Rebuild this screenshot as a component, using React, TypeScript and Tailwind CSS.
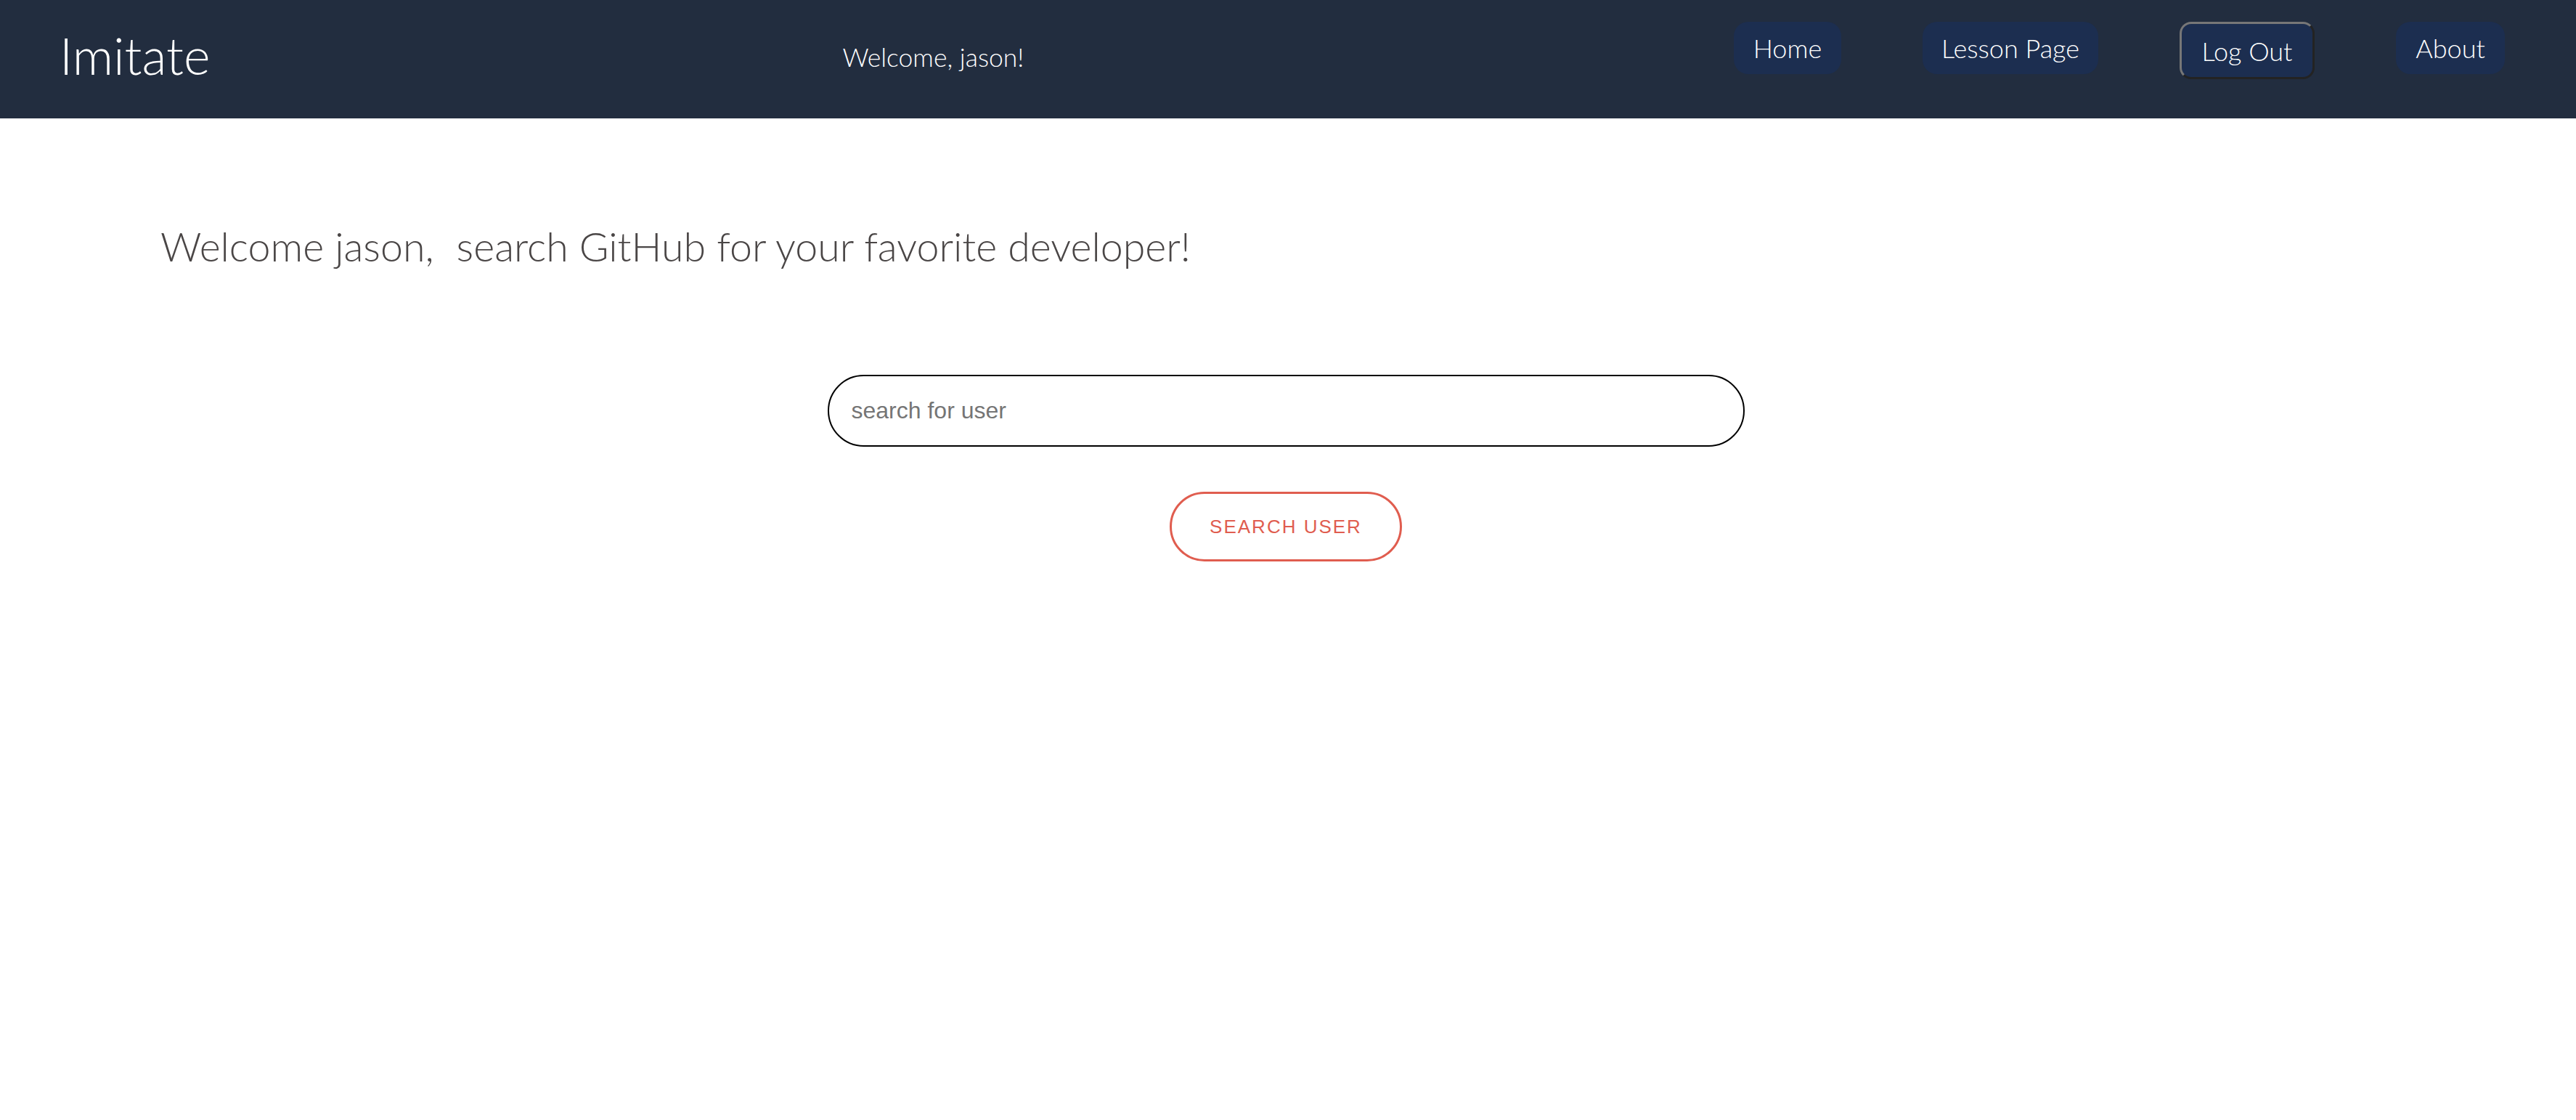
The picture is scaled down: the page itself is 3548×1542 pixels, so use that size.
import { useState } from 'react';

const navLinks = [
  { label: 'Home', width: 'w-[148px]' },
  { label: 'Lesson Page', width: 'w-[242px]' },
];

export default function App() {
  const [query, setQuery] = useState('');

  return (
    <div className="min-h-screen bg-white" style={{ fontFamily: 'Lato, "Open Sans", sans-serif' }}>
      <header className="h-[163px] bg-[#222d3f] flex items-start text-white">
        <div className="mt-[41px] pl-[82px] text-[70px] leading-none font-light">Imitate</div>
        <div className="mt-[61px] ml-[871px] text-[35.5px] leading-none font-light">Welcome, jason!</div>
        <nav className="ml-auto pr-[98px] mt-[30px] flex items-start gap-[112px]">
          {navLinks.map(link => (
            <a
              key={link.label}
              href="#"
              className={`${link.width} h-[72px] flex items-center justify-center rounded-[20px] bg-[#1c2e50] text-[36px] leading-none font-light`}
            >
              {link.label}
            </a>
          ))}
          <button className="w-[186px] h-[79px] flex items-center justify-center rounded-[16px] border-[3px] border-t-[#777777] border-l-[#777777] border-b-[#232323] border-r-[#232323] bg-[#1c2e50] text-[36px] leading-none font-light text-white">
            Log Out
          </button>
          <a
            href="#"
            className="w-[150px] h-[72px] flex items-center justify-center rounded-[20px] bg-[#1c2e50] text-[36px] leading-none font-light"
          >
            About
          </a>
        </nav>
      </header>

      <main>
        <h1 className="mt-[148px] h-[56px] pl-[221px] text-[55.5px] leading-none font-light text-[#4a4646]">
          Welcome jason,<span className="ml-[31px]">search GitHub for your favorite developer!</span>
        </h1>

        <div className="mt-[149px] flex flex-col items-center">
          <input
            autoFocus
            value={query}
            onChange={e => setQuery(e.target.value)}
            placeholder="search for user"
            className="w-[1263px] h-[99px] -translate-x-[3px] rounded-full border-2 border-black pl-[31px] text-[32px] text-black placeholder:text-[#757575] outline-none"
            style={{ fontFamily: '"Liberation Sans", Arial, sans-serif' }}
          />
          <button
            className="mt-[62px] w-[320px] h-[96px] -translate-x-[3px] rounded-full border-[3px] border-[#e05d4f] text-[#e05d4f] text-[26px] tracking-[2px] leading-none"
            style={{ fontFamily: '"Liberation Sans", Arial, sans-serif' }}
          >
            SEARCH USER
          </button>
        </div>
      </main>
    </div>
  );
}
